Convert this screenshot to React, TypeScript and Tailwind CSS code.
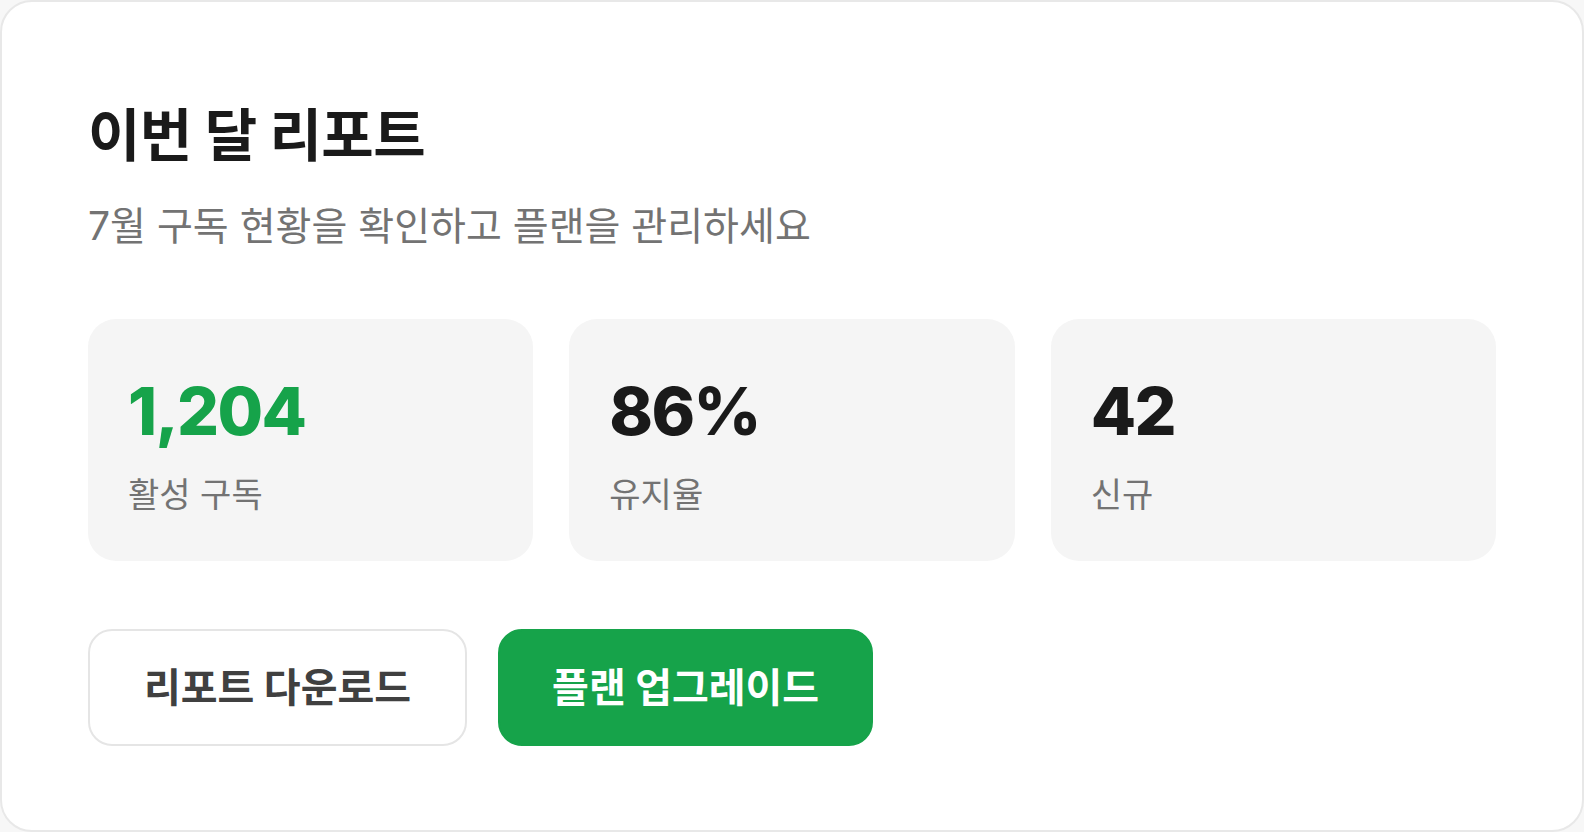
const stats = [
  { value: '1,204', label: '활성 구독', accent: true },
  { value: '86%', label: '유지율', accent: false },
  { value: '42', label: '신규', accent: false },
];

export default function App() {
  return (
    <div className="min-h-[832px] w-full bg-[#f7f7f7] font-['Inter','Noto_Sans_CJK_KR',sans-serif]">
      <div className="h-[832px] w-full rounded-[32px] border-2 border-[#e8e8e8] bg-white px-[86px] pt-[100px]">
        {/* Header */}
        <h1 className="text-[57px] font-bold leading-[68px] tracking-[-0.01em] text-[#1a1a1a]">
          이번 달 리포트
        </h1>
        <p className="mt-[30px] text-[39px] leading-[52px] text-[#737373]">
          7월 구독 현황을 확인하고 플랜을 관리하세요
        </p>

        {/* Stats */}
        <div className="mt-[67px] grid grid-cols-3 gap-[36px]">
          {stats.map((stat) => (
            <div key={stat.label} className="flex h-[242px] flex-col rounded-[28px] bg-[#f5f5f5] px-[40px] pt-[52px]">
              <div
                className={`text-[66px] font-extrabold leading-[80px] tracking-[-0.025em] ${
                  stat.accent ? 'text-[#16a34a]' : 'text-[#1a1a1a]'
                }`}
              >
                {stat.value}
              </div>
              <div className="mt-[22px] text-[34px] leading-[44px] text-[#737373]">{stat.label}</div>
            </div>
          ))}
        </div>

        {/* Actions */}
        <div className="mt-[68px] flex gap-[31px]">
          <button className="h-[117px] rounded-[24px] border-2 border-[#e5e5e5] bg-white px-[54px] text-[40px] font-bold text-[#404040]">
            리포트 다운로드
          </button>
          <button className="h-[117px] rounded-[24px] border-2 border-[#16a34a] bg-[#16a34a] px-[52px] text-[40px] font-bold text-white">
            플랜 업그레이드
          </button>
        </div>
      </div>
    </div>
  );
}
